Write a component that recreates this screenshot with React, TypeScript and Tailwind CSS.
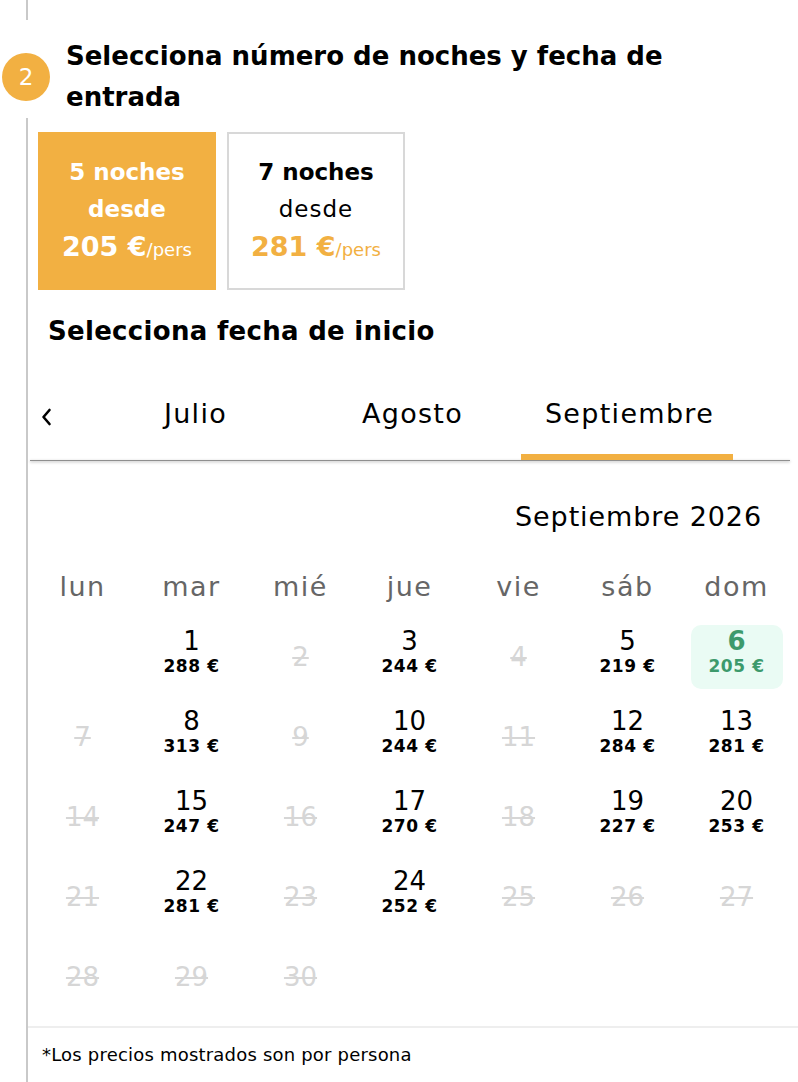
import React from "react";

type Day = { d: number; price?: number; selected?: boolean };

const days: Day[] = [
  { d: 1, price: 288 },
  { d: 2 },
  { d: 3, price: 244 },
  { d: 4 },
  { d: 5, price: 219 },
  { d: 6, price: 205, selected: true },
  { d: 7 },
  { d: 8, price: 313 },
  { d: 9 },
  { d: 10, price: 244 },
  { d: 11 },
  { d: 12, price: 284 },
  { d: 13, price: 281 },
  { d: 14 },
  { d: 15, price: 247 },
  { d: 16 },
  { d: 17, price: 270 },
  { d: 18 },
  { d: 19, price: 227 },
  { d: 20, price: 253 },
  { d: 21 },
  { d: 22, price: 281 },
  { d: 23 },
  { d: 24, price: 252 },
  { d: 25 },
  { d: 26 },
  { d: 27 },
  { d: 28 },
  { d: 29 },
  { d: 30 },
];

const weekdays = ["lun", "mar", "mié", "jue", "vie", "sáb", "dom"];

function DayCell({ day }: { day: Day }) {
  if (!day.price) {
    return (
      <div className="h-[64px] flex items-center justify-center">
        <span className="text-[26px] text-[#d6d6d6] line-through decoration-[1.5px]">{day.d}</span>
      </div>
    );
  }
  if (day.selected) {
    return (
      <div className="h-[64px] flex justify-center">
        <div className="w-[92px] h-[64px] rounded-[10px] bg-[#eafbf4] flex flex-col items-center pt-[1px] text-[#3d9a6c]">
          <span className="text-[26px] font-bold leading-[30px]">{day.d}</span>
          <span className="text-[17px] font-bold leading-[20px] tracking-[0.6px]">{day.price} €</span>
        </div>
      </div>
    );
  }
  return (
    <div className="h-[64px] flex flex-col items-center pt-[1px] text-black">
      <span className="text-[26px] leading-[30px]">{day.d}</span>
      <span className="text-[17px] font-bold leading-[20px] tracking-[0.6px]">{day.price} €</span>
    </div>
  );
}

export default function App() {
  return (
    <div className="w-[798px] min-h-[1082px] bg-white text-black font-['DejaVu_Sans',sans-serif]">
      <div className="ml-[26px] h-[20px] border-l-2 border-[#c9c9c9]" />

      {/* Step header */}
      <div className="flex items-center pt-[16px]">
        <div className="ml-[2px] w-[48px] h-[48px] rounded-full bg-[#f2b042] text-white flex items-center justify-center text-[23px] shrink-0">
          2
        </div>
        <h2 className="ml-[16px] text-[26px] font-bold leading-[41px] w-[650px]">
          Selecciona número de noches y fecha de entrada
        </h2>
      </div>

      <div className="ml-[26px] border-l-2 border-[#c9c9c9] pt-[14px]">
        {/* Night options */}
        <div className="flex gap-[11px] pl-[10px]">
          <div className="w-[178px] h-[158px] bg-[#f2b042] text-white flex flex-col items-center justify-center font-bold">
            <span className="text-[23px] leading-[37px]">5 noches</span>
            <span className="text-[23px] leading-[37px]">desde</span>
            <span className="leading-[37px]">
              <span className="text-[27px]">205 €</span>
              <span className="text-[18px] font-normal">/pers</span>
            </span>
          </div>
          <div className="w-[178px] h-[158px] border-2 border-[#d8d8d8] flex flex-col items-center justify-center">
            <span className="text-[23px] leading-[37px] font-bold">7 noches</span>
            <span className="text-[23px] leading-[37px] tracking-[1px]">desde</span>
            <span className="leading-[37px] text-[#f2b042]">
              <span className="text-[27px] font-bold">281 €</span>
              <span className="text-[18px]">/pers</span>
            </span>
          </div>
        </div>

        <h3 className="pl-[20px] mt-[23px] text-[26px] font-bold leading-[36px] tracking-[0.3px]">
          Selecciona fecha de inicio
        </h3>

        {/* Month tabs */}
        <div className="mt-[29px] mr-[8px] ml-[2px]">
          <div className="flex items-stretch h-[82px]">
            <button className="w-[57px] flex items-center pl-[10px] pb-[4px]">
              <svg width="12" height="20" viewBox="0 0 12 20" fill="none">
                <path d="M9.5 3 L3.5 10 L9.5 17" stroke="#000" strokeWidth="2.6" strokeLinecap="round" strokeLinejoin="round" />
              </svg>
            </button>
            {["Julio", "Agosto", "Septiembre"].map((m, i) => (
              <div key={m} className="w-[217px] flex flex-col">
                <span className="flex-1 flex items-center justify-center pb-[4px] text-[27px] tracking-[1.3px]">{m}</span>
                <span className={i === 2 ? "w-[212px] h-[6px] bg-[#f2b042]" : "h-[6px]"} />
              </div>
            ))}
          </div>
          <div className="h-[1px] bg-[#8f8f8f] shadow-[0_1px_3px_rgba(0,0,0,0.4)]" />
        </div>

        {/* Month calendar */}
        <div className="w-[763px]">
          <div className="flex justify-end pr-[29px] pt-[38px] text-[27px] leading-[36px] tracking-[0.9px]">
            Septiembre 2026
          </div>
          <div className="grid grid-cols-7 mt-[34px] text-[27px] leading-[36px] text-[#666] tracking-[1.5px]">
            {weekdays.map((w) => (
              <div key={w} className="text-center">{w}</div>
            ))}
          </div>
          <div className="grid grid-cols-7 gap-y-[16px] mt-[20px]">
            <div />
            {days.map((day) => (
              <DayCell key={day.d} day={day} />
            ))}
          </div>
        </div>

        <div className="mt-[17px] border-t-2 border-[#eeeeee] pl-[14px] pt-[14px] pb-[14px] text-[18px] leading-[26px] tracking-[0.2px]">
          *Los precios mostrados son por persona
        </div>
      </div>
    </div>
  );
}
